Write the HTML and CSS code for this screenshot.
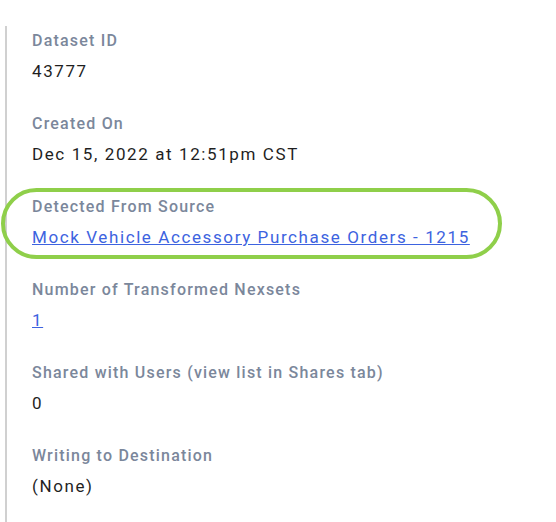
FILE: index.html
```html
<!DOCTYPE html>
<html lang="en">

<head>
    <meta charset="UTF-8">
    <meta name="viewport" content="width=device-width, initial-scale=1.0">
    <title>Dataset Details</title>
    <link rel="stylesheet" href="styles.css">
</head>

<body>
    <div class="details">
        <div class="field">
            <div class="label">Dataset ID</div>
            <div class="value">43777</div>
        </div>
        <div class="field">
            <div class="label">Created On</div>
            <div class="value">Dec 15, 2022 at 12:51pm CST</div>
        </div>
        <div class="field highlight">
            <div class="label">Detected From Source</div>
            <div class="value"><a href="#">Mock Vehicle Accessory Purchase Orders - 1215</a></div>
        </div>
        <div class="field">
            <div class="label">Number of Transformed Nexsets</div>
            <div class="value"><a href="#">1</a></div>
        </div>
        <div class="field">
            <div class="label">Shared with Users (view list in Shares tab)</div>
            <div class="value">0</div>
        </div>
        <div class="field">
            <div class="label">Writing to Destination</div>
            <div class="value">(None)</div>
        </div>
    </div>
</body>

</html>
```

FILE: styles.css
```css
body {
    margin: 0;
    padding: 0;
    background-color: #fff;
    font-family: Roboto, "Liberation Sans", Arial, sans-serif;
}

.details {
    margin: 26px 0 0 5px;
    padding: 5px 0 0 25px;
    border-left: 2px solid #d0d0d0;
    min-height: 500px;
    box-sizing: border-box;
    width: 520px;
}

.field {
    height: 83px;
}

.label {
    font-size: 16px;
    font-weight: 500;
    letter-spacing: 1.2px;
    color: #7b879b;
    line-height: 20px;
}

.value {
    margin-top: 9px;
    font-size: 17px;
    letter-spacing: 1.6px;
    color: #1f1f1f;
    line-height: 22px;
}

.value a {
    color: #3d63e0;
}

.highlight {
    position: relative;
}

.highlight::before {
    content: "";
    position: absolute;
    left: -31px;
    width: 501px;
    top: -9px;
    height: 71px;
    box-sizing: border-box;
    border: 4px solid #8fcf4a;
    border-radius: 36px;
}
```
